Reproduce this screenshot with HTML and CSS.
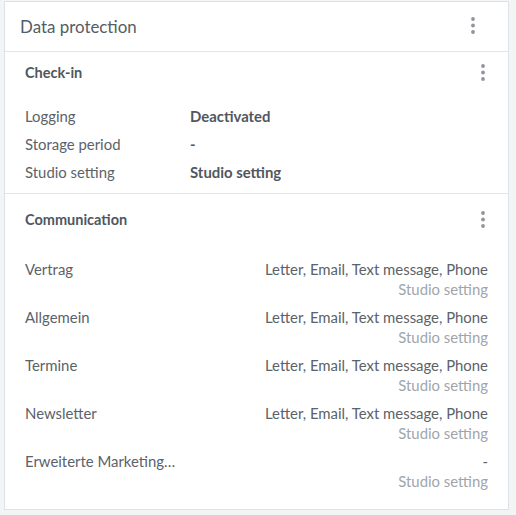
FILE: index.html
```html
<!DOCTYPE html>
<html lang="en">
<head>
    <meta charset="UTF-8">
    <meta name="viewport" content="width=device-width, initial-scale=1.0">
    <title>Data protection</title>
    <link rel="stylesheet" href="styles.css">
</head>
<body>
    <div class="card">
        <div class="card-header">
            <span class="card-title">Data protection</span>
            <span class="menu menu-main">
                <svg width="4" height="17" viewBox="0 0 4 17"><circle cx="2" cy="2" r="1.9"/><circle cx="2" cy="8.5" r="1.9"/><circle cx="2" cy="15" r="1.9"/></svg>
            </span>
        </div>

        <div class="section checkin">
            <div class="section-head">
                <span class="section-title">Check-in</span>
                <span class="menu">
                    <svg width="4" height="17" viewBox="0 0 4 17"><circle cx="2" cy="2" r="1.9"/><circle cx="2" cy="8.5" r="1.9"/><circle cx="2" cy="15" r="1.9"/></svg>
                </span>
            </div>
            <div class="info-row">
                <span class="label">Logging</span>
                <span class="value">Deactivated</span>
            </div>
            <div class="info-row">
                <span class="label">Storage period</span>
                <span class="value">-</span>
            </div>
            <div class="info-row">
                <span class="label">Studio setting</span>
                <span class="value">Studio setting</span>
            </div>
        </div>

        <div class="section communication">
            <div class="section-head">
                <span class="section-title">Communication</span>
                <span class="menu">
                    <svg width="4" height="17" viewBox="0 0 4 17"><circle cx="2" cy="2" r="1.9"/><circle cx="2" cy="8.5" r="1.9"/><circle cx="2" cy="15" r="1.9"/></svg>
                </span>
            </div>
            <div class="channel-list">
                <div class="channel">
                    <span class="label">Vertrag</span>
                    <div class="channel-value">
                        <span class="channels">Letter, Email, Text message, Phone</span>
                        <span class="source">Studio setting</span>
                    </div>
                </div>
                <div class="channel">
                    <span class="label">Allgemein</span>
                    <div class="channel-value">
                        <span class="channels">Letter, Email, Text message, Phone</span>
                        <span class="source">Studio setting</span>
                    </div>
                </div>
                <div class="channel">
                    <span class="label">Termine</span>
                    <div class="channel-value">
                        <span class="channels">Letter, Email, Text message, Phone</span>
                        <span class="source">Studio setting</span>
                    </div>
                </div>
                <div class="channel">
                    <span class="label">Newsletter</span>
                    <div class="channel-value">
                        <span class="channels">Letter, Email, Text message, Phone</span>
                        <span class="source">Studio setting</span>
                    </div>
                </div>
                <div class="channel">
                    <span class="label">Erweiterte Marketing…</span>
                    <div class="channel-value">
                        <span class="channels">-</span>
                        <span class="source">Studio setting</span>
                    </div>
                </div>
            </div>
        </div>
    </div>
</body>
</html>
```

FILE: styles.css
```css
*{
    margin: 0;
    padding: 0;
    box-sizing: border-box;
}

body {
    background: #f3f4f5;
    padding: 1px 7px 0 4px;
    font-family: 'Lato', 'Noto Sans', sans-serif;
    color: #5b6269;
    font-size: 14.9px;
}

.card {
    background: #fff;
    border: 1px solid #dfe2e4;
    height: 509px;
}

.card-header {
    height: 50px;
    display: flex;
    align-items: center;
    justify-content: space-between;
    padding: 0 33px 0 15px;
    border-bottom: 1px solid #e3e6e8;
}

.card-title {
    font-size: 16.9px;
    color: #555d64;
    margin-top: -1px;
}

.menu {
    display: flex;
    fill: #8f959a;
}

.menu-main {
    margin-top: -2px;
}

.section {
    padding: 0 20px;
}

.checkin {
    padding-top: 10px;
    padding-bottom: 7px;
    border-bottom: 1px solid #e3e6e8;
}

.communication {
    padding-top: 15px;
}

.section-head {
    display: flex;
    align-items: center;
    justify-content: space-between;
    height: 20px;
    padding-right: 3px;
}

.section-title {
    font-weight: bold;
    font-size: 14.5px;
    color: #4f575e;
}

.checkin .section-head {
    margin-bottom: 20px;
}

.info-row {
    display: flex;
    height: 28px;
    align-items: center;
}

.info-row .label {
    width: 165px;
}

.value {
    font-weight: bold;
    color: #4f575e;
}

.channel-list {
    margin-top: 30px;
    display: flex;
    flex-direction: column;
    gap: 8px;
}

.channel {
    display: flex;
    justify-content: space-between;
    line-height: 20px;
}

.channel-value {
    display: flex;
    flex-direction: column;
    align-items: flex-end;
}

.source {
    color: #a0a5aa;
}
```
